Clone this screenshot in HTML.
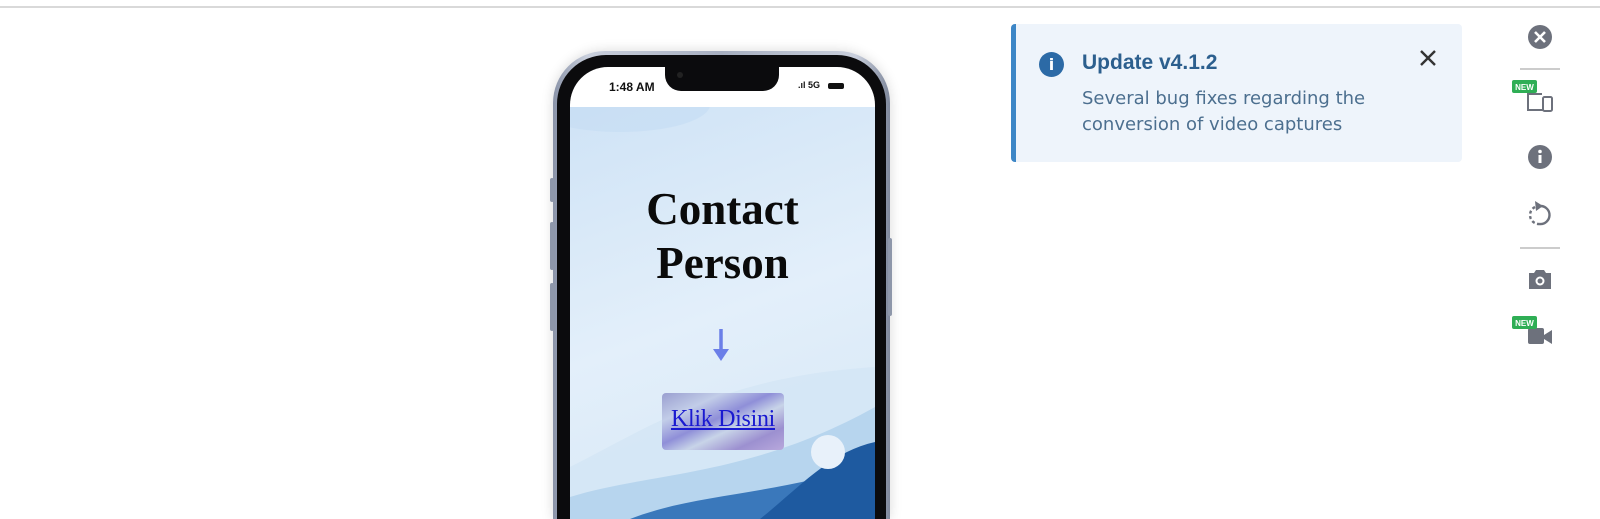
<!DOCTYPE html>
<html><head><meta charset="utf-8"><style>
*{margin:0;padding:0;box-sizing:border-box}
html,body{width:1600px;height:519px;overflow:hidden}
body{background:#fff;position:relative;font-family:"Liberation Sans",sans-serif}
.topline{position:absolute;left:0;top:6px;width:1600px;height:2px;background:#d9d9d9}
.abs{position:absolute}
</style></head><body>
<div class="topline"></div>

<div class="abs" style="left:553px;top:51px;width:337px;height:468px;border-radius:52px 52px 0 0;background:linear-gradient(90deg,#8a93a8,#c9cfdc 10%,#a7afc0 50%,#c9cfdc 90%,#7f889c);box-shadow:0 0 12px rgba(0,0,0,.15)"></div>
<div class="abs" style="left:550px;top:178px;width:4px;height:24px;background:#8e97aa;border-radius:2px"></div>
<div class="abs" style="left:550px;top:222px;width:4px;height:48px;background:#8e97aa;border-radius:2px"></div>
<div class="abs" style="left:550px;top:283px;width:4px;height:48px;background:#8e97aa;border-radius:2px"></div>
<div class="abs" style="left:888px;top:238px;width:4px;height:78px;background:#8e97aa;border-radius:2px"></div>
<div class="abs" style="left:557px;top:55px;width:329px;height:464px;border-radius:49px 49px 0 0;background:#0b0b0d"></div>
<div class="abs" style="left:570px;top:67px;width:305px;height:452px;border-radius:38px 38px 0 0;overflow:hidden;background:#fff">
  <div class="abs" style="left:0;top:40px;width:305px;height:412px;background:linear-gradient(160deg,#cfe3f6,#e3effa 50%,#d4e6f6);overflow:hidden">
    <div class="abs" style="left:-40px;top:-30px;width:180px;height:55px;border-radius:50%;background:#c4dcf3;opacity:.6"></div>
    <svg class="abs" style="left:0;top:250px" width="305" height="162" viewBox="0 0 305 162">
      <path d="M0 110 C80 70 150 20 305 10 L305 162 L0 162Z" fill="#d3e6f5" opacity=".8"/>
      <path d="M0 140 C80 115 180 120 305 50 L305 162 L0 162Z" fill="#b7d5ee"/>
      <path d="M60 162 C130 135 200 140 305 105 L305 162Z" fill="#3a78bb"/>
      <path d="M190 162 C230 130 260 95 305 85 L305 162Z" fill="#1e5aa0"/>
      <circle cx="258" cy="95" r="17" fill="#e8f1fa"/>
    </svg>
  </div>
  <div class="abs" style="left:39px;top:13px;font-size:12px;font-weight:bold;color:#111">1:48 AM</div>
  <div class="abs" style="left:228px;top:13px;font-size:9px;font-weight:bold;color:#111">.ıl 5G</div>
  <div class="abs" style="left:258px;top:16px;width:16px;height:6px;background:#111;border-radius:2px"></div>
  <div class="abs" style="left:0;top:115px;width:305px;text-align:center;font-family:'Liberation Serif',serif;font-weight:bold;font-size:45px;line-height:54px;color:#0a0a0a">Contact<br>Person</div>
  <svg class="abs" style="left:140px;top:262px" width="22" height="34"><path d="M11 0V22" stroke="#6b7fe8" stroke-width="3.5"/><path d="M3 20L11 32L19 20Z" fill="#6b7fe8"/></svg>
  <div class="abs" style="left:92px;top:326px;width:122px;height:57px;border-radius:4px;background:linear-gradient(155deg,#9a9fd0,#c2cde8 25%,#8f8fd8 45%,#c8d4e8 60%,#9c90d0 80%,#b8a8dc);text-align:center;padding-top:13px">
    <span style="font-family:'Liberation Serif',serif;font-size:24px;color:#1a1ad0;text-decoration:underline;letter-spacing:-0.3px">Klik Disini</span>
  </div>
</div>
<div class="abs" style="left:665px;top:62px;width:114px;height:29px;background:#0b0b0d;border-radius:0 0 16px 16px"></div>
<div class="abs" style="left:677px;top:72px;width:6px;height:6px;border-radius:50%;background:#222"></div>

<div class="abs" style="left:1011px;top:24px;width:451px;height:138px;background:#eef4fb;border-left:5px solid #3d86c6;border-radius:4px"></div>
<div class="abs" style="left:1039px;top:52px;width:25px;height:25px;border-radius:50%;background:#2c6aa6;color:#fff;font-weight:bold;font-size:16px;text-align:center;line-height:25px;font-family:'DejaVu Sans',sans-serif">i</div>
<div class="abs" style="left:1082px;top:51px;font-size:21px;font-weight:bold;color:#2c5f8e">Update v4.1.2</div>
<div class="abs" style="left:1082px;top:86px;line-height:26px;color:#4c6f8f;font-family:'DejaVu Sans',sans-serif;font-size:18px">Several bug fixes regarding the<br>conversion of video captures</div>
<svg class="abs" style="left:1418px;top:48px" width="20" height="20"><path d="M3 3L17 17M17 3L3 17" stroke="#333" stroke-width="2.4"/></svg>

<svg class="abs" style="left:1510px;top:15px" width="70" height="340" viewBox="0 0 70 340">
  <g fill="#6d717c">
    <circle cx="30" cy="22" r="12"/>
    <path d="M25 17L35 27M35 17L25 27" stroke="#fff" stroke-width="2.6"/>
    <rect x="10" y="53" width="40" height="2" fill="#ccc"/>
    <rect x="17" y="78" width="2" height="18"/><rect x="17" y="94" width="16" height="2"/><rect x="17" y="78" width="15" height="2"/>
    <rect x="33" y="82" width="9" height="14" rx="1.5" fill="none" stroke="#6d717c" stroke-width="2"/>
    <rect x="2" y="65" width="25" height="13" rx="2" fill="#2fae55"/>
    <text x="14.5" y="75" font-size="8" font-weight="bold" fill="#fff" text-anchor="middle" font-family="Liberation Sans">NEW</text>
    <circle cx="30" cy="142" r="12"/>
    <rect x="28.5" y="140" width="3" height="8" fill="#fff"/><circle cx="30" cy="136.5" r="1.8" fill="#fff"/>
    <path d="M31 191 A9 9 0 0 1 30 209" fill="none" stroke="#6d717c" stroke-width="2.4"/>
    <path d="M30 209 A9 9 0 0 1 25 192" fill="none" stroke="#6d717c" stroke-width="2.4" stroke-dasharray="3 2.5"/>
    <path d="M25 186 L33 191 L26 196z"/>
    <rect x="10" y="232" width="40" height="2" fill="#ccc"/>
    <path d="M19 258h5l2-3h8l2 3h5v16h-22z"/>
    <circle cx="30" cy="266" r="4.5" fill="#fff"/><circle cx="30" cy="266" r="2.5"/>
    <rect x="18" y="313" width="16" height="16" rx="2"/>
    <path d="M34 320l8-5v14l-8-5z"/>
    <rect x="2" y="301" width="25" height="13" rx="2" fill="#2fae55"/>
    <text x="14.5" y="311" font-size="8" font-weight="bold" fill="#fff" text-anchor="middle" font-family="Liberation Sans">NEW</text>
  </g>
</svg>
</body></html>
